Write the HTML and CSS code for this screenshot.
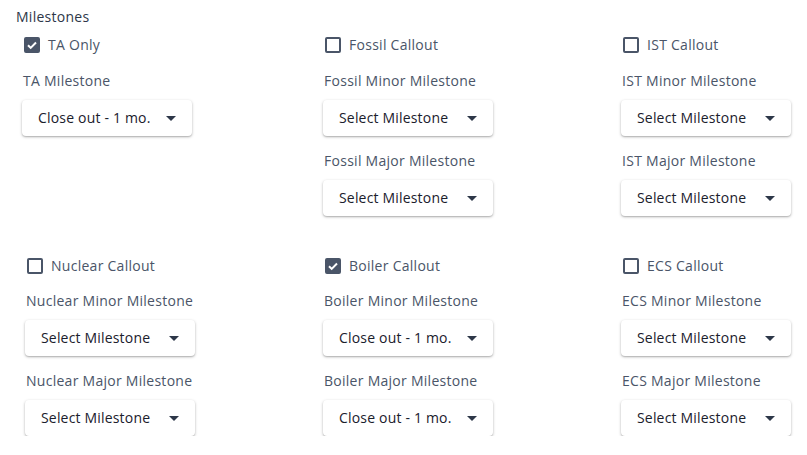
FILE: index.html
```html
<!DOCTYPE html>
<html lang="en">
<head>
<meta charset="utf-8">
<title>Milestones</title>
<link rel="stylesheet" href="styles.css">
</head>
<body>
<div class="page">
  <div class="title">Milestones</div>

  <div class="row row--top">
    <div class="cell">
      <label class="check"><span class="box box--on"><svg viewBox="0 0 16 16" width="16" height="16"><path d="M4 8.2l2.7 2.7L12 5.5" fill="none" stroke="#fff" stroke-width="2"/></svg></span><span>TA Only</span></label>
      <div class="field">
        <div class="label">TA Milestone</div>
        <div class="select"><span>Close out - 1 mo.</span><span class="caret"></span></div>
      </div>
    </div>
    <div class="cell">
      <label class="check"><span class="box"></span><span>Fossil Callout</span></label>
      <div class="field">
        <div class="label">Fossil Minor Milestone</div>
        <div class="select"><span>Select Milestone</span><span class="caret"></span></div>
      </div>
      <div class="field">
        <div class="label">Fossil Major Milestone</div>
        <div class="select"><span>Select Milestone</span><span class="caret"></span></div>
      </div>
    </div>
    <div class="cell">
      <label class="check"><span class="box"></span><span>IST Callout</span></label>
      <div class="field">
        <div class="label">IST Minor Milestone</div>
        <div class="select"><span>Select Milestone</span><span class="caret"></span></div>
      </div>
      <div class="field">
        <div class="label">IST Major Milestone</div>
        <div class="select"><span>Select Milestone</span><span class="caret"></span></div>
      </div>
    </div>
  </div>

  <div class="row">
    <div class="cell">
      <label class="check"><span class="box"></span><span>Nuclear Callout</span></label>
      <div class="field">
        <div class="label">Nuclear Minor Milestone</div>
        <div class="select"><span>Select Milestone</span><span class="caret"></span></div>
      </div>
      <div class="field">
        <div class="label">Nuclear Major Milestone</div>
        <div class="select"><span>Select Milestone</span><span class="caret"></span></div>
      </div>
    </div>
    <div class="cell">
      <label class="check"><span class="box box--on"><svg viewBox="0 0 16 16" width="16" height="16"><path d="M4 8.2l2.7 2.7L12 5.5" fill="none" stroke="#fff" stroke-width="2"/></svg></span><span>Boiler Callout</span></label>
      <div class="field">
        <div class="label">Boiler Minor Milestone</div>
        <div class="select"><span>Close out - 1 mo.</span><span class="caret"></span></div>
      </div>
      <div class="field">
        <div class="label">Boiler Major Milestone</div>
        <div class="select"><span>Close out - 1 mo.</span><span class="caret"></span></div>
      </div>
    </div>
    <div class="cell">
      <label class="check"><span class="box"></span><span>ECS Callout</span></label>
      <div class="field">
        <div class="label">ECS Minor Milestone</div>
        <div class="select"><span>Select Milestone</span><span class="caret"></span></div>
      </div>
      <div class="field">
        <div class="label">ECS Major Milestone</div>
        <div class="select"><span>Select Milestone</span><span class="caret"></span></div>
      </div>
    </div>
  </div>
</div>
</body>
</html>
```

FILE: styles.css
```css
* { box-sizing: border-box; }
html, body { margin: 0; padding: 0; background: #fff; }
body {
  font-family: "Open Sans", "Noto Sans", sans-serif;
  font-size: 14px;
  line-height: 20px;
  letter-spacing: 0.27px;
  color: #4a5568;
}
.page {
  padding-top: 7px;
  display: flex;
  flex-direction: column;
}
.title {
  padding-left: 16px;
  color: #2d3748;
  margin-bottom: 8px;
}
.row {
  display: grid;
  grid-template-columns: 298px 298px 1fr;
  padding-left: 25px;
}
.row--top {
  grid-template-columns: 301px 298px 1fr;
  padding-left: 22px;
  margin-bottom: 40px;
}
.cell {
  display: flex;
  flex-direction: column;
  gap: 15px;
}
.check {
  display: flex;
  align-items: center;
  gap: 8px;
  height: 20px;
  padding-left: 2px;
  color: #4a5568;
}
.row--top .check { margin-bottom: 1px; }
.box {
  width: 16px;
  height: 16px;
  border: 2px solid #4a5568;
  border-radius: 2px;
  display: flex;
  align-items: center;
  justify-content: center;
  flex: none;
}
.box--on {
  background: #4a5568;
}
.box--on svg { flex: none; margin: -2px; }
.field {
  display: flex;
  flex-direction: column;
  gap: 9px;
}
.label {
  padding-left: 1px;
  color: #4a5568;
}
.select {
  width: 170px;
  height: 36px;
  display: flex;
  align-items: center;
  justify-content: space-between;
  padding: 0 16px;
  background: #fff;
  border-radius: 4px;
  box-shadow: 0 1px 3px rgba(0,0,0,0.28), 0 1px 1px rgba(0,0,0,0.10);
  color: #1a202c;
  font-weight: 500;
  letter-spacing: 0.18px;
}
.caret {
  width: 0;
  height: 0;
  border-left: 5px solid transparent;
  border-right: 5px solid transparent;
  border-top: 5px solid #2d3748;
}
```
